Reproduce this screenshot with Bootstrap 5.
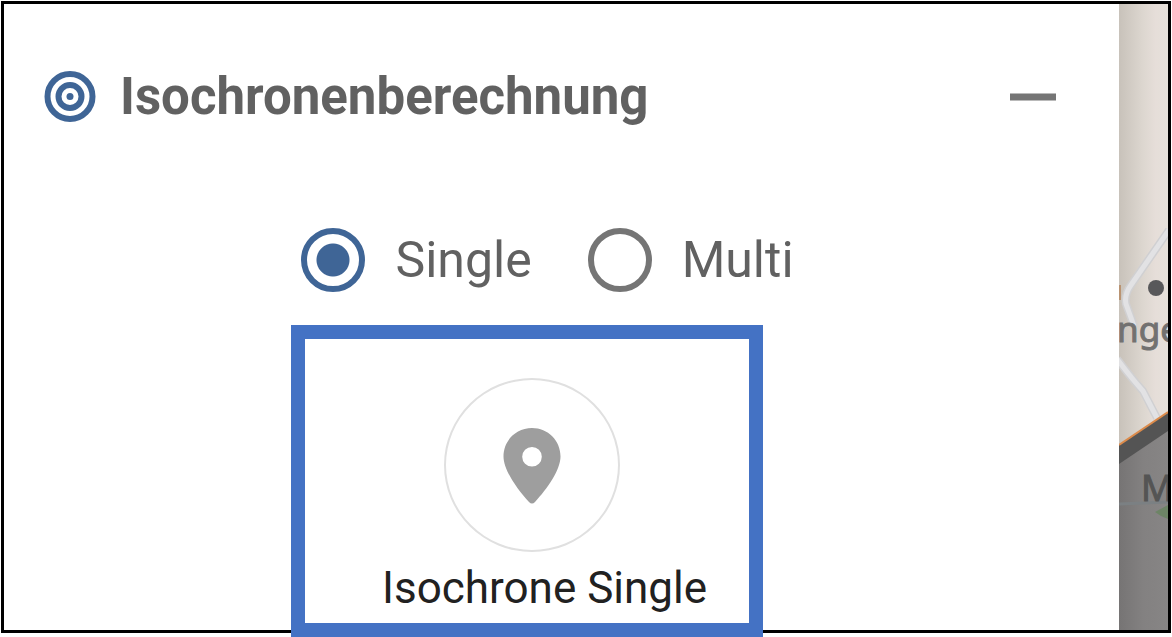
<!DOCTYPE html>
<html lang="de">
<head>
<meta charset="utf-8">
<meta name="viewport" content="width=device-width, initial-scale=1">
<title>Isochronenberechnung</title>
<link href="https://cdn.jsdelivr.net/npm/bootstrap@5.3.0/dist/css/bootstrap.min.css" rel="stylesheet">
<style>
  body { font-family: Roboto, "Liberation Sans", sans-serif; background: #fff; padding: 1px 1px 4px; }
  .app-frame { border: 3px solid #000; }
  .panel-head { padding: 60px 60px 0 40px; }
  .panel-title { font-size: 51px; line-height: 66px; font-weight: 700; color: #616161; margin-left: 24px; }
  .collapse-btn { width: 52px; height: 52px; color: #757575; }
  .mode-row { padding: 97px 28px 0 0; gap: 56px; }
  .mode-option { gap: 30px; font-size: 50px; line-height: 66px; color: #616161; }
  .mode-option .form-check-input { width: 64px; height: 64px; border: 6px solid #757575; background: #fff; }
  .mode-option .form-check-input:checked { border-color: #3f6596; background: radial-gradient(circle, #3f6596 0 16px, #fff 17px); }
  .callout-row { padding-right: 70px; }
  .callout-box { width: 472px; border: 14px solid #4472c4; background: #fff; margin-top: 32px; margin-bottom: -7px; padding: 39px 0 0 36px; }
  .pin-btn { width: 176px; height: 174px; border: 2px solid #e0e0e0; margin-right: 26px; padding: 2px 0 0; color: #9e9e9e; background: #fff; }
  .pin-label { font-size: 44px; line-height: 58px; color: #212121; padding: 7px 0 6px; }
  .map-strip { width: 49px; background: #dcd6cf; }
  .map-strip svg { font-family: "Noto Sans", sans-serif; }
</style>
</head>
<body>
<main class="app-frame d-flex align-items-stretch">
  <section class="flex-grow-1">
    <header class="panel-head d-flex align-items-center">
      <svg width="52" height="52" viewBox="0 0 52 52" fill="none" stroke="#3f6596" aria-hidden="true">
        <circle cx="26" cy="25.500" r="22.500" stroke-width="6"/>
        <circle cx="26" cy="25.500" r="11.500" stroke-width="6"/>
        <circle cx="26" cy="25.500" r="3.500" fill="#3f6596" stroke="none"/>
      </svg>
      <h1 class="panel-title mb-0">Isochronenberechnung</h1>
      <button type="button" class="collapse-btn btn border-0 p-0 ms-auto d-flex align-items-center justify-content-center" aria-label="Einklappen">
        <svg width="46" height="8" viewBox="0 0 46 8" aria-hidden="true"><path d="M0 .5h46v7H0z" fill="currentColor"/></svg>
      </button>
    </header>
    <div class="mode-row d-flex justify-content-center">
      <label class="mode-option d-flex align-items-center" for="modeSingle">
        <input class="form-check-input m-0" type="radio" name="mode" id="modeSingle" checked>Single
      </label>
      <label class="mode-option d-flex align-items-center" for="modeMulti">
        <input class="form-check-input m-0" type="radio" name="mode" id="modeMulti">Multi
      </label>
    </div>
    <div class="callout-row d-flex justify-content-center">
      <div class="callout-box position-relative d-flex flex-column align-items-center">
        <button type="button" id="pinButton" class="pin-btn btn rounded-circle d-flex align-items-center justify-content-center" aria-labelledby="pinLabel">
          <svg width="58" height="78" viewBox="0 0 58 78" aria-hidden="true">
            <path fill="currentColor" fill-rule="evenodd" d="M29 1C13 1 .5 13.500.5 29.500C.5 43 14 62 26 75Q29 78 32 75C44 62 57.500 43 57.500 29.500C57.500 13.500 45 1 29 1ZM29 20a9.800 9.800 0 1 1 0 19.600a9.800 9.800 0 1 1 0-19.600Z"/>
          </svg>
        </button>
        <label class="pin-label" id="pinLabel" for="pinButton">Isochrone Single</label>
      </div>
    </div>
  </section>
  <aside class="map-strip flex-shrink-0 position-relative overflow-hidden" aria-label="Karte">
    <svg class="position-absolute top-0 start-0" width="49" height="100%" viewBox="0 0 49 626" preserveAspectRatio="xMinYMin slice">
      <defs>
        <linearGradient id="land"><stop offset="0" stop-color="#c8c2ba"/><stop offset=".5" stop-color="#ddd7d0"/><stop offset=".75" stop-color="#e6ded9"/><stop offset="1" stop-color="#e5e0da"/></linearGradient>
        <linearGradient id="area"><stop offset="0" stop-color="#767474"/><stop offset=".5" stop-color="#838181"/><stop offset="1" stop-color="#878585"/></linearGradient>
      </defs>
      <path fill="url(#land)" d="M0 0h49v626H0z"/>
      <g fill="none" stroke-linejoin="round">
        <path stroke="#d0d0d2" stroke-width="8" d="M50 226L12 281Q5 291 7 300L15 322M-2 355Q14 376 24 387L38 414"/>
        <path stroke="#e2e2e4" stroke-width="5" d="M50 226L12 281Q5 291 7 300L15 322M-2 355Q14 376 24 387L38 414"/>
        <path stroke="#b99372" stroke-width="2" d="M1 281v15"/>
      </g>
      <circle cx="37" cy="284" r="8" fill="#58585a"/>
      <text x="-2" y="338" font-size="35" fill="#727170" stroke="#727170">nge</text>
      <path fill="url(#area)" d="M0 442L49 412v214H0z"/>
      <path fill="#545454" d="M0 441L49 408v19L0 460z"/>
      <path fill="none" stroke="#dc8b4b" stroke-width="2" d="M0 441L49 408"/>
      <path stroke="#7b8083" stroke-width="3" d="M0 500l49-2"/>
      <text x="22" y="497" font-size="36" fill="#545454" stroke="#545454">M</text>
      <path fill="#6d8466" d="M36 508l13-7v14l-7-3z"/>
    </svg>
  </aside>
</main>
<script src="https://cdn.jsdelivr.net/npm/bootstrap@5.3.0/dist/js/bootstrap.bundle.min.js"></script>
</body>
</html>
